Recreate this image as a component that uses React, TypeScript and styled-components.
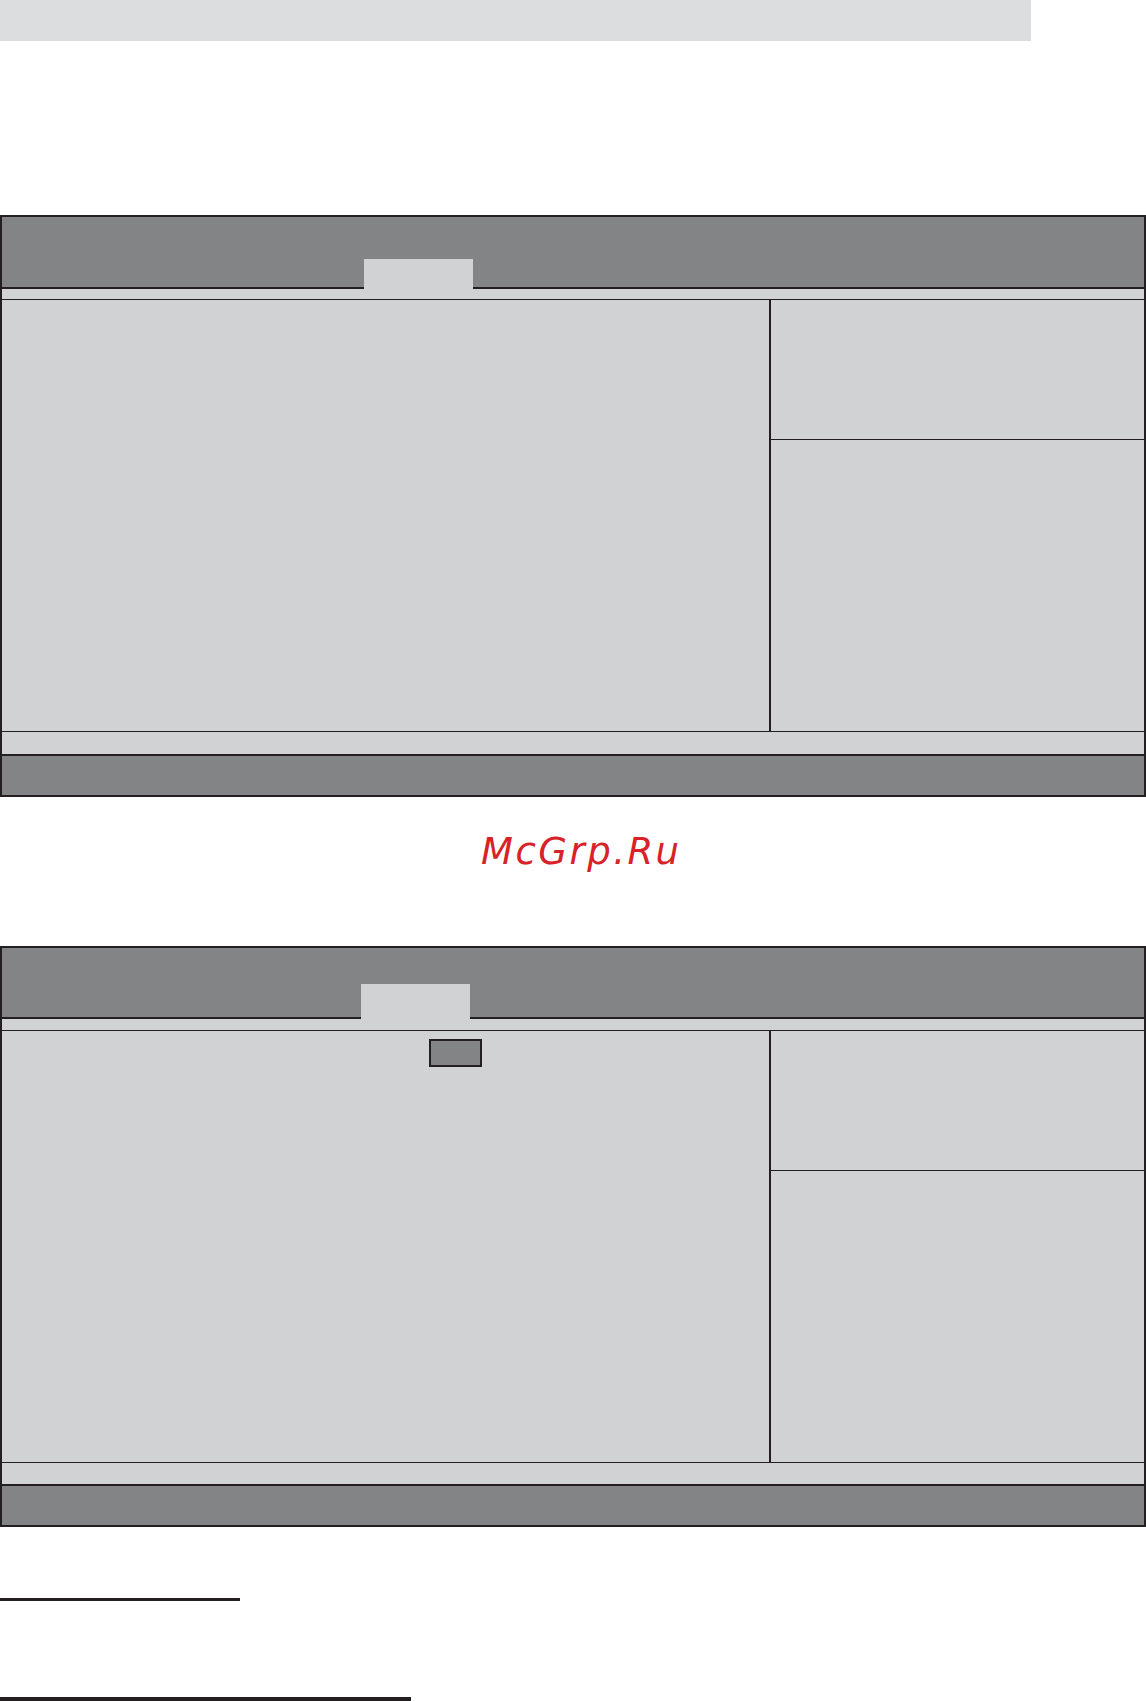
import React from 'react';
import styled, { createGlobalStyle } from 'styled-components';

const GlobalStyle = createGlobalStyle`
  html, body {
    margin: 0;
    padding: 0;
    background: #ffffff;
    font-family: "DejaVu Sans", "Liberation Sans", sans-serif;
  }
`;

const DARK = '#231f20';
const MID = '#838486';
const LIGHT = '#d1d2d4';

type PanelSpec = {
  headerHeight: number;
  tabLeft: number;
  tabHeight: number;
  stripHeight: number;
  footStripHeight: number;
  withValueBox?: boolean;
};

const panels: PanelSpec[] = [
  { headerHeight: 70, tabLeft: 362, tabHeight: 30, stripHeight: 10, footStripHeight: 22 },
  { headerHeight: 69, tabLeft: 359, tabHeight: 35, stripHeight: 11, footStripHeight: 21, withValueBox: true },
];

const Panel: React.FC<{ spec: PanelSpec; top: number }> = ({ spec, top }) => (
  <Frame $top={top}>
    <Header $height={spec.headerHeight} $tabLeft={spec.tabLeft}>
      <Tab $height={spec.tabHeight} />
    </Header>
    <Strip $height={spec.stripHeight} />
    <Body>
      <LeftColumn>{spec.withValueBox && <ValueBox />}</LeftColumn>
      <RightColumn>
        <HelpTop />
        <HelpBottom />
      </RightColumn>
    </Body>
    <FootStrip $height={spec.footStripHeight} />
    <Footer />
  </Frame>
);

const App: React.FC = () => (
  <>
    <GlobalStyle />
    <Page>
      <TopBar />
      <Panel spec={panels[0]} top={174} />
      <Watermark>McGrp.Ru</Watermark>
      <Panel spec={panels[1]} top={72} />
      <Rule $width={240} $thick={3} $top={71} />
      <Rule $width={411} $thick={4} $top={96} />
    </Page>
  </>
);

export default App;

const Page = styled.div`
  width: 1146px;
  display: flex;
  flex-direction: column;
`;

const TopBar = styled.div`
  width: 1031px;
  height: 41px;
  background: #dcdddf;
`;

const Frame = styled.div<{ $top: number }>`
  margin-top: ${(p) => p.$top}px;
  width: 1146px;
  box-sizing: border-box;
  border: 2px solid ${DARK};
  display: flex;
  flex-direction: column;
`;

const Header = styled.div<{ $height: number; $tabLeft: number }>`
  height: ${(p) => p.$height}px;
  background: ${MID};
  border-bottom: 2px solid ${DARK};
  display: flex;
  align-items: flex-end;
  padding-left: ${(p) => p.$tabLeft}px;
`;

const Tab = styled.div<{ $height: number }>`
  width: 109px;
  height: ${(p) => p.$height}px;
  margin-bottom: -2px;
  background: ${LIGHT};
  position: relative;
`;

const Strip = styled.div<{ $height: number }>`
  height: ${(p) => p.$height}px;
  background: ${LIGHT};
  border-bottom: 1px solid ${DARK};
`;

const Body = styled.div`
  height: 431px;
  display: grid;
  grid-template-columns: 767px 1fr;
  background: ${LIGHT};
  border-bottom: 1px solid ${DARK};
`;

const LeftColumn = styled.div`
  padding: 8px 0 0 427px;
`;

const ValueBox = styled.div`
  width: 49px;
  height: 24px;
  background: ${MID};
  border: 2px solid ${DARK};
`;

const RightColumn = styled.div`
  border-left: 2px solid ${DARK};
  display: flex;
  flex-direction: column;
`;

const HelpTop = styled.div`
  height: 139px;
  border-bottom: 1px solid ${DARK};
`;

const HelpBottom = styled.div`
  flex: 1;
`;

const FootStrip = styled.div<{ $height: number }>`
  height: ${(p) => p.$height}px;
  background: ${LIGHT};
  border-bottom: 2px solid ${DARK};
`;

const Footer = styled.div`
  height: 39px;
  background: ${MID};
`;

const Watermark = styled.div`
  margin: 33px 0 0 481px;
  height: 44px;
  font-family: "DejaVu Sans", "Liberation Sans", sans-serif;
  font-style: oblique;
  font-size: 37px;
  line-height: 44px;
  letter-spacing: 2.5px;
  color: #d72229;
  white-space: nowrap;
`;

const Rule = styled.div<{ $width: number; $thick: number; $top: number }>`
  margin-top: ${(p) => p.$top}px;
  width: ${(p) => p.$width}px;
  height: ${(p) => p.$thick}px;
  background: ${DARK};
`;
